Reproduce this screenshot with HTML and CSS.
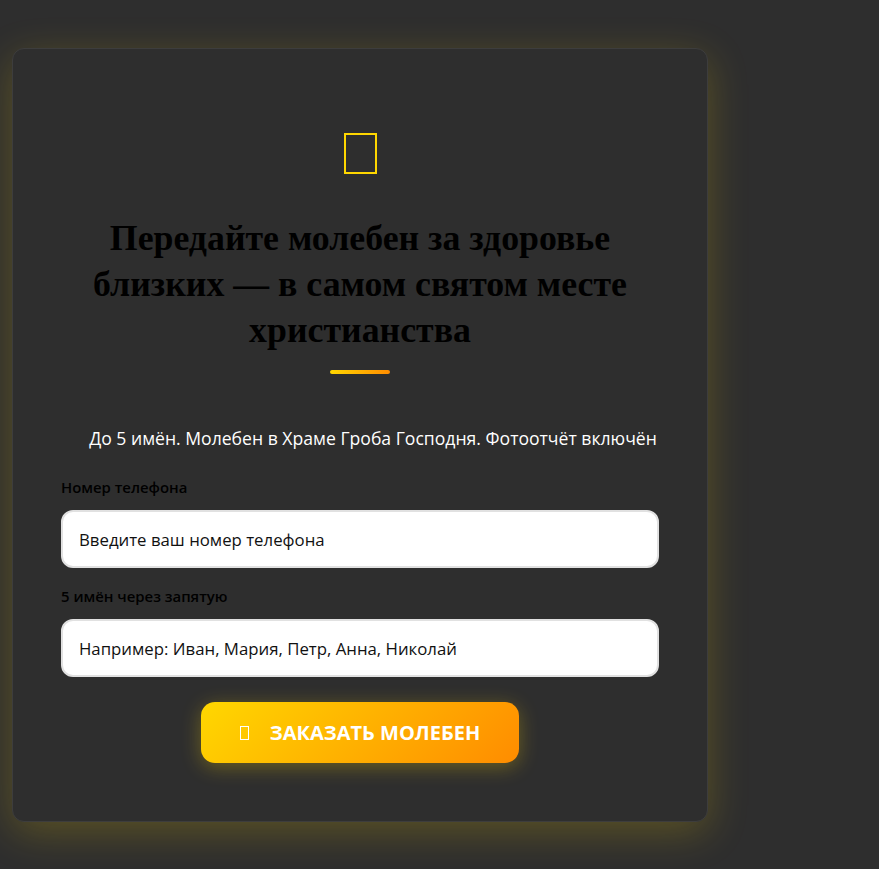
FILE: index.html
```html
<!DOCTYPE html>
<html lang="ru">
<head>
<meta charset="utf-8">
<link rel="stylesheet" href="styles.css">
</head>
<body>
<div class="page">
  <form class="card">
    <div class="icon"><span class="tofu"></span></div>
    <h1 class="title">Передайте молебен за здоровье близких — в самом святом месте христианства</h1>
    <div class="bar"></div>
    <p class="subtitle">До 5 имён. Молебен в Храме Гроба Господня. Фотоотчёт включён</p>
    <div class="field">
      <label class="label">Номер телефона</label>
      <div class="input">Введите ваш номер телефона</div>
    </div>
    <div class="field">
      <label class="label">5 имён через запятую</label>
      <div class="input">Например: Иван, Мария, Петр, Анна, Николай</div>
    </div>
    <div class="actions">
      <button type="button" class="btn"><span class="btn-tofu"></span>ЗАКАЗАТЬ МОЛЕБЕН</button>
    </div>
  </form>
</div>
</body>
</html>
```
FILE: styles.css
```css
* { box-sizing: border-box; }
html, body { margin: 0; padding: 0; }
body {
  background: #2e2e2e;
  width: 879px;
  height: 869px;
  overflow: hidden;
}
.page {
  padding: 48px 12px;
}
.card {
  width: 696px;
  background: #2e2e2e;
  border: 1px solid #3d3d3d;
  border-radius: 12px;
  padding: 48px 48px 58px;
  box-shadow: 0 10px 40px rgba(255, 215, 0, 0.22);
  display: flex;
  flex-direction: column;
}
.icon {
  display: flex;
  justify-content: center;
  padding-top: 36px;
}
.tofu {
  width: 33px;
  height: 41px;
  border: 2px solid #ffd700;
}
.title {
  margin: 41px 0 0;
  font-family: "Liberation Serif", serif;
  font-weight: bold;
  font-size: 35.8px;
  line-height: 46px;
  color: #000;
  text-align: center;
}
.bar {
  width: 60px;
  height: 4px;
  border-radius: 2px;
  margin: 17px auto 0;
  background: linear-gradient(90deg, #ffd700, #ff8c00);
}
.subtitle {
  margin: 53px 0 0;
  padding-left: 26px;
  font-family: "Open Sans", sans-serif;
  font-size: 17.6px;
  line-height: 22px;
  color: #fff;
  text-align: center;
}
.field {
  display: flex;
  flex-direction: column;
  margin-top: 29px;
}
.field + .field { margin-top: 19px; }
.label {
  font-family: "Open Sans", sans-serif;
  font-weight: 600;
  font-size: 14.9px;
  line-height: 19px;
  color: #000;
  margin-bottom: 13px;
}
.input {
  height: 58px;
  background: #fff;
  border: 2px solid #e1e1e1;
  border-radius: 12px;
  padding: 0 16px;
  display: flex;
  align-items: center;
  font-family: "Open Sans", sans-serif;
  font-size: 16.8px;
  color: #111;
}
.actions {
  display: flex;
  justify-content: center;
  margin-top: 25px;
}
.btn {
  width: 318px;
  height: 61px;
  border: none;
  border-radius: 14px;
  background: linear-gradient(135deg, #ffd700, #ff8c00);
  box-shadow: 0 4px 20px rgba(255, 215, 0, 0.3);
  color: #fff;
  font-family: "Open Sans", sans-serif;
  font-weight: bold;
  font-size: 20px;
  display: flex;
  align-items: center;
  justify-content: center;
  gap: 21px;
}
.btn-tofu {
  width: 9px;
  height: 14px;
  border: 1.5px solid #fff;
}
```
